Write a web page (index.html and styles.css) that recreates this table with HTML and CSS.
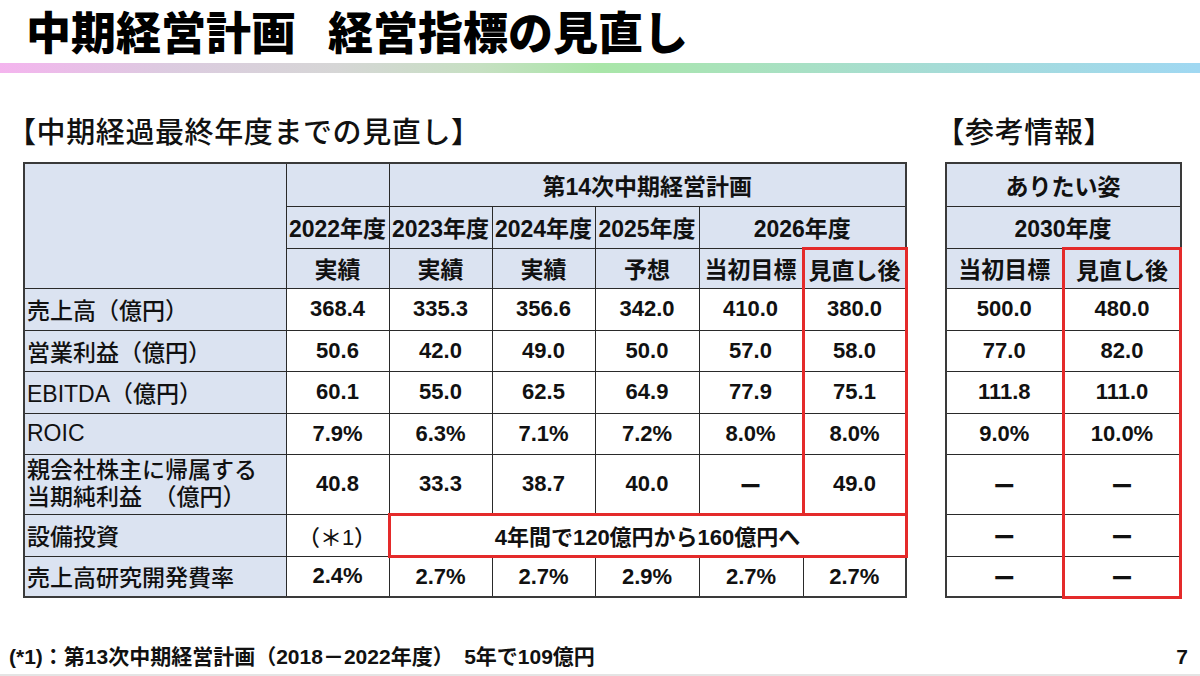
FILE: index.html
```html
<!DOCTYPE html>
<html lang="ja">
<head>
<meta charset="utf-8">
<title>中期経営計画 経営指標の見直し</title>
<link rel="stylesheet" href="styles.css">
</head>
<body>
<div class="page">
  <h1 class="title"><span>中期経営計画</span><span class="title-gap"></span><span>経営指標の見直し</span></h1>
  <div class="grad-bar"></div>

  <div class="sections">
    <section class="sec-left">
      <h2 class="sec-head">【中期経過最終年度までの見直し】</h2>
      <table class="tbl main-tbl">
        <colgroup>
          <col class="c-label"><col class="c-y"><col class="c-y"><col class="c-y"><col class="c-y25"><col class="c-y25"><col class="c-y">
        </colgroup>
        <tr class="r-h1">
          <th class="hd" rowspan="3"></th>
          <th class="hd"></th>
          <th class="hd" colspan="5">第14次中期経営計画</th>
        </tr>
        <tr class="r-h2">
          <th class="hd">2022年度</th>
          <th class="hd">2023年度</th>
          <th class="hd">2024年度</th>
          <th class="hd">2025年度</th>
          <th class="hd" colspan="2">2026年度</th>
        </tr>
        <tr class="r-h3">
          <th class="hd">実績</th>
          <th class="hd">実績</th>
          <th class="hd">実績</th>
          <th class="hd">予想</th>
          <th class="hd">当初目標</th>
          <th class="hd red-col red-top">見直し後</th>
        </tr>
        <tr class="r-a">
          <td class="lbl">売上高（億円）</td>
          <td>368.4</td><td>335.3</td><td>356.6</td><td>342.0</td><td>410.0</td><td class="red-col">380.0</td>
        </tr>
        <tr class="r-b">
          <td class="lbl">営業利益（億円）</td>
          <td>50.6</td><td>42.0</td><td>49.0</td><td>50.0</td><td>57.0</td><td class="red-col">58.0</td>
        </tr>
        <tr class="r-a">
          <td class="lbl">EBITDA（億円）</td>
          <td>60.1</td><td>55.0</td><td>62.5</td><td>64.9</td><td>77.9</td><td class="red-col">75.1</td>
        </tr>
        <tr class="r-b">
          <td class="lbl">ROIC</td>
          <td>7.9%</td><td>6.3%</td><td>7.1%</td><td>7.2%</td><td>8.0%</td><td class="red-col">8.0%</td>
        </tr>
        <tr class="r-tall">
          <td class="lbl lbl-2">親会社株主に帰属する<br>当期純利益　（億円）</td>
          <td>40.8</td><td>33.3</td><td>38.7</td><td>40.0</td><td>ー</td><td class="red-col red-bottom">49.0</td>
        </tr>
        <tr class="r-a">
          <td class="lbl">設備投資</td>
          <td class="note">（＊1）</td>
          <td class="red-box" colspan="5">4年間で120億円から160億円へ</td>
        </tr>
        <tr class="r-b">
          <td class="lbl">売上高研究開発費率</td>
          <td>2.4%</td><td>2.7%</td><td>2.7%</td><td>2.9%</td><td>2.7%</td><td>2.7%</td>
        </tr>
      </table>
    </section>

    <section class="sec-right">
      <h2 class="sec-head">【参考情報】</h2>
      <table class="tbl ref-tbl">
        <colgroup><col class="c-r1"><col class="c-r2"></colgroup>
        <tr class="r-h1"><th class="hd" colspan="2">ありたい姿</th></tr>
        <tr class="r-h2"><th class="hd" colspan="2">2030年度</th></tr>
        <tr class="r-h3"><th class="hd">当初目標</th><th class="hd red-col red-top">見直し後</th></tr>
        <tr class="r-a"><td>500.0</td><td class="red-col">480.0</td></tr>
        <tr class="r-b"><td>77.0</td><td class="red-col">82.0</td></tr>
        <tr class="r-a"><td>111.8</td><td class="red-col">111.0</td></tr>
        <tr class="r-b"><td>9.0%</td><td class="red-col">10.0%</td></tr>
        <tr class="r-tall"><td>ー</td><td class="red-col">ー</td></tr>
        <tr class="r-a"><td>ー</td><td class="red-col">ー</td></tr>
        <tr class="r-b"><td>ー</td><td class="red-col red-bottom">ー</td></tr>
      </table>
    </section>
  </div>

  <div class="footer">
    <p class="footnote">(*1)：第13次中期経営計画（2018－2022年度）　5年で109億円</p>
    <span class="page-no">7</span>
  </div>
  <div class="bottom-line"></div>
</div>
</body>
</html>
```

FILE: styles.css
```css
html, body {
  margin: 0;
  padding: 0;
  background: #ffffff;
}

body {
  font-family: "Liberation Sans", "Noto Sans CJK JP", sans-serif;
  color: #111111;
}

.page {
  width: 1200px;
  height: 676px;
  display: flex;
  flex-direction: column;
  overflow: hidden;
}

.title {
  margin: 0;
  padding: 10px 0 0 26px;
  height: 50px;
  line-height: 50px;
  font-size: 45px;
  font-weight: 900;
  color: #000000;
  display: flex;
  white-space: nowrap;
}

.title-gap {
  width: 32px;
}

.grad-bar {
  margin-top: 3px;
  height: 10px;
  background: linear-gradient(90deg,
    #f4b4ee 0%,
    #dccbe0 14%,
    #d6d6d6 28%,
    #c6e0c2 40%,
    #a9e6a8 50%,
    #a9e2bd 62%,
    #a6dcd6 78%,
    #a0d8f2 100%);
}

.sections {
  display: flex;
  margin-top: 42px;
}

.sec-head {
  margin: 0 0 11px 0;
  height: 36px;
  line-height: 36px;
  font-size: 29px;
  font-weight: 500;
  letter-spacing: 0.6px;
  color: #111111;
  white-space: nowrap;
}

.sec-left {
  padding-left: 7px;
}

.sec-left .tbl {
  margin-left: 16px;
}

.sec-right {
  margin-left: 28px;
}

.sec-right .tbl {
  margin-left: 9px;
}

.tbl {
  border-collapse: collapse;
  table-layout: fixed;
  border: 2px solid #3a3a3a;
}

.main-tbl {
  width: 881px;
}

.ref-tbl {
  width: 235px;
}

.c-label { width: 262px; }
.c-y { width: 103px; }
.c-y25 { width: 104px; }
.c-r1 { width: 118px; }
.c-r2 { width: 117px; }

.tbl th,
.tbl td {
  border: 1px solid #2a2a2a;
  padding: 0;
  text-align: center;
  vertical-align: middle;
  white-space: nowrap;
  font-size: 22px;
  font-weight: 700;
  color: #111111;
}

.tbl th.hd {
  background: #dbe3f1;
  font-size: 23px;
}

.tbl td.lbl {
  background: #dbe3f1;
  text-align: left;
  padding-left: 2px;
  font-size: 23px;
  font-weight: 500;
}

.tbl td.lbl-2 {
  line-height: 27px;
}

.tbl td.note {
  font-weight: 500;
}

.r-h1 { height: 43px; }
.r-h2 { height: 42px; }
.r-h3 { height: 40px; }
.r-a { height: 42px; }
.r-b { height: 41px; }
.r-tall { height: 60px; }

.tbl .red-col {
  border-left: 3px solid #e42a2a;
  border-right: 3px solid #e42a2a;
}

.tbl .red-top {
  border-top: 3px solid #e42a2a;
}

.tbl .red-bottom {
  border-bottom: 3px solid #e42a2a;
}

.tbl td.red-box {
  border: 3px solid #e42a2a;
  font-weight: 700;
}

.footer {
  display: flex;
  justify-content: space-between;
  align-items: center;
  margin-top: 46px;
  padding: 0 12px 0 9px;
  height: 24px;
}

.footnote {
  margin: 0;
  font-size: 21px;
  font-weight: 700;
  line-height: 24px;
  white-space: nowrap;
  color: #111111;
}

.page-no {
  font-size: 21px;
  font-weight: 700;
  line-height: 24px;
  color: #111111;
}

.bottom-line {
  margin-top: auto;
  height: 2px;
  background: #e4e4e4;
}
```
